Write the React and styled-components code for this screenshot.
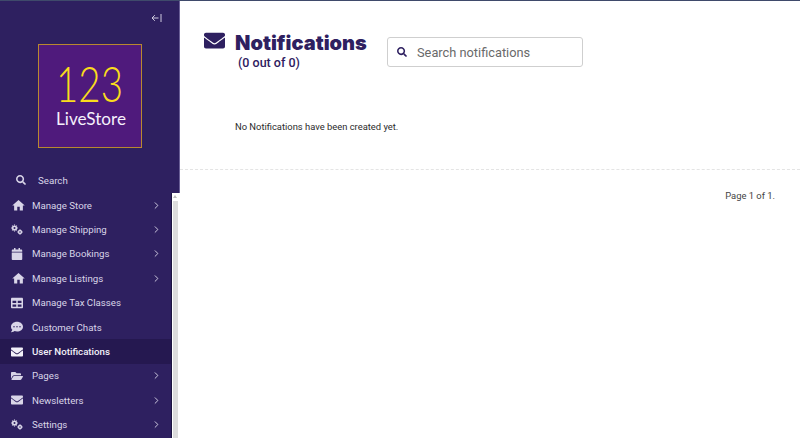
import React from "react";
import styled, { createGlobalStyle } from "styled-components";
import { FaCalendar, FaTable, FaCommentDots, FaEnvelope, FaFolderOpen, FaSearch } from "react-icons/fa";
import { MdHome } from "react-icons/md";
import { LuChevronRight } from "react-icons/lu";

const Global = createGlobalStyle`
  html, body { margin: 0; padding: 0; height: 100%; background: #fff; overflow: hidden; }
  body { font-family: Roboto, "Noto Sans", sans-serif; }
`;

const Page = styled.div`
  display: flex;
  width: 800px;
  height: 438px;
  overflow: hidden;
  border-top: 1px solid #3f4a6b;
  box-sizing: border-box;
`;

const Sidebar = styled.aside`
  width: 180px;
  flex: none;
  display: flex;
  flex-direction: column;
`;

const SideTop = styled.div`
  height: 192px;
  flex: none;
  background: #2e2060;
  border-right: 1px solid #6a5f96;
  box-sizing: border-box;
  display: flex;
  flex-direction: column;
`;

const Collapse = styled.div`
  display: flex;
  justify-content: flex-end;
  padding: 12px 17px 0 0;
  height: 32px;
  box-sizing: border-box;
  color: #cfcadf;
`;

const LogoSvg = styled.svg`
  display: block;
  flex: none;
  margin: 11px 0 0 38px;
`;

const SearchRow = styled.div`
  display: flex;
  align-items: center;
  margin-top: 25px;
  padding-left: 16px;
  color: #d9d5e8;
  font-size: 9.7px;
  height: 14px;
  gap: 12px;
`;

const NavWrap = styled.div`
  flex: 1;
  display: flex;
  min-height: 0;
`;

const Nav = styled.nav`
  width: 172px;
  flex: none;
  background: #2e2060;
  border-right: 1px solid #1c1440;
  box-sizing: border-box;
  display: flex;
  flex-direction: column;
`;

const Gutter = styled.div`
  width: 8px;
  flex: none;
  background: #fff;
  display: flex;
  flex-direction: column;
  align-items: flex-start;
  padding: 2px 0 0 1px;
  box-sizing: border-box;
`;

const ScrollUp = styled.div`
  width: 0;
  height: 0;
  border-left: 2.5px solid transparent;
  border-right: 2.5px solid transparent;
  border-bottom: 3px solid #bdbdbd;
`;

const Thumb = styled.div`
  width: 5px;
  flex: 1;
  margin-top: 3px;
  background: #dcdcdc;
`;

const Item = styled.div`
  height: 24.4px;
  flex: none;
  display: flex;
  align-items: center;
  padding: 0 9px 0 11px;
  color: ${(p) => (p.$active ? "#f2f0f8" : "#d9d5e8")};
  background: ${(p) => (p.$active ? "#251850" : "transparent")};
  font-size: 9.7px;
  font-weight: ${(p) => (p.$active ? 500 : 400)};
`;

const ItemIcon = styled.span`
  width: 21px;
  flex: none;
  display: flex;
  align-items: center;
  font-size: 12px;
`;

const ItemLabel = styled.span`
  flex: 1;
  white-space: nowrap;
`;

const Chevron = styled.span`
  display: flex;
  font-size: 11px;
  color: #d9d5e8;
`;

const Main = styled.main`
  flex: 1;
  min-width: 0;
  display: flex;
  flex-direction: column;
  color: #2e2060;
`;

const Top = styled.div`
  height: 169px;
  flex: none;
  box-sizing: border-box;
  border-bottom: 1px dashed #e4e4e4;
  padding: 29px 0 0 24px;
`;

const Header = styled.div`
  display: flex;
  align-items: flex-start;
`;

const TitleIcon = styled.div`
  width: 31px;
  flex: none;
  font-size: 21px;
  display: flex;
  line-height: 1;
`;

const TitleBlock = styled.div`
  width: 152px;
  flex: none;
`;

const Title = styled.h1`
  margin: 0;
  font-family: Inter, sans-serif;
  font-weight: 900;
  font-size: 20px;
  line-height: 26px;
  white-space: nowrap;
`;

const Count = styled.div`
  font-size: 12.5px;
  font-weight: 500;
  line-height: 16px;
  padding-left: 3px;
  margin-top: -1px;
`;

const SearchBox = styled.div`
  width: 196px;
  height: 30px;
  margin-top: 7px;
  box-sizing: border-box;
  border: 1px solid #cfcfcf;
  border-radius: 3px;
  display: flex;
  align-items: center;
  padding-left: 9px;
  gap: 10px;
  font-size: 10px;
`;

const SearchText = styled.span`
  font-size: 12.8px;
  color: #6a6a6a;
`;

const Empty = styled.p`
  margin: 49px 0 0 31px;
  font-size: 9.4px;
  line-height: 14px;
  color: #2b2b2b;
`;

const Pager = styled.div`
  padding: 19px 25px 0 0;
  text-align: right;
  font-size: 9.4px;
  line-height: 14px;
  color: #444;
`;

function Gears() {
  return (
    <svg width="12" height="12" viewBox="0 0 12 12" fill="none" stroke="currentColor">
      <circle cx="3.5" cy="4" r="1.8" strokeWidth="1.6" />
      <circle cx="9" cy="8" r="1.5" strokeWidth="1.4" />
      <path d="M3.5 0.6v1M3.5 6.4v1M0.1 4h1M5.9 4h1M1.1 1.6l.7.7M5.9 1.6l-.7.7M1.1 6.4l.7-.7M5.9 6.4l-.7-.7" strokeWidth="1.1" />
      <path d="M9 5.3v1M9 9.7v1M6.3 8h1M10.7 8h1" strokeWidth="1" />
    </svg>
  );
}

function CollapseArrow() {
  return (
    <svg width="11" height="10" viewBox="0 0 11 10" fill="none" stroke="currentColor" strokeWidth="1">
      <path d="M7.5 5H1M3.8 2.2L1 5l2.8 2.8M10 1v8" />
    </svg>
  );
}

function LogoMark() {
  return (
    <LogoSvg width="104" height="104" viewBox="0 0 104 104">
      <rect x="0.5" y="0.5" width="103" height="103" fill="#4f1a7c" stroke="#b8892f" />
      <text
        x="51.5"
        y="58"
        textAnchor="middle"
        fontFamily="Lato, sans-serif"
        fontWeight="300"
        fontSize="50"
        fill="#fadc1c"
        textLength="67"
        lengthAdjust="spacingAndGlyphs"
      >
        123
      </text>
      <text
        x="53"
        y="81"
        textAnchor="middle"
        fontFamily="Lato, sans-serif"
        fontWeight="400"
        fontSize="18"
        fill="#f5f0fb"
        textLength="70"
        lengthAdjust="spacingAndGlyphs"
      >
        LiveStore
      </text>
    </LogoSvg>
  );
}

const items = [
  { label: "Manage Store", icon: <MdHome size={15} />, more: true },
  { label: "Manage Shipping", icon: <Gears />, more: true },
  { label: "Manage Bookings", icon: <FaCalendar />, more: true },
  { label: "Manage Listings", icon: <MdHome size={15} />, more: true },
  { label: "Manage Tax Classes", icon: <FaTable /> },
  { label: "Customer Chats", icon: <FaCommentDots /> },
  { label: "User Notifications", icon: <FaEnvelope />, active: true },
  { label: "Pages", icon: <FaFolderOpen />, more: true },
  { label: "Newsletters", icon: <FaEnvelope />, more: true },
  { label: "Settings", icon: <Gears />, more: true },
];

export default function App() {
  return (
    <>
      <Global />
      <Page>
        <Sidebar>
          <SideTop>
            <Collapse>
              <CollapseArrow />
            </Collapse>
            <LogoMark />
            <SearchRow>
              <FaSearch size={10} />
              <span>Search</span>
            </SearchRow>
          </SideTop>
          <NavWrap>
            <Nav>
              {items.map((it) => (
                <Item key={it.label} $active={it.active}>
                  <ItemIcon>{it.icon}</ItemIcon>
                  <ItemLabel>{it.label}</ItemLabel>
                  {it.more && (
                    <Chevron>
                      <LuChevronRight />
                    </Chevron>
                  )}
                </Item>
              ))}
            </Nav>
            <Gutter>
              <ScrollUp />
              <Thumb />
            </Gutter>
          </NavWrap>
        </Sidebar>
        <Main>
          <Top>
            <Header>
              <TitleIcon>
                <FaEnvelope />
              </TitleIcon>
              <TitleBlock>
                <Title>Notifications</Title>
                <Count>(0 out of 0)</Count>
              </TitleBlock>
              <SearchBox>
                <FaSearch />
                <SearchText>Search notifications</SearchText>
              </SearchBox>
            </Header>
            <Empty>No Notifications have been created yet.</Empty>
          </Top>
          <Pager>Page 1 of 1.</Pager>
        </Main>
      </Page>
    </>
  );
}
